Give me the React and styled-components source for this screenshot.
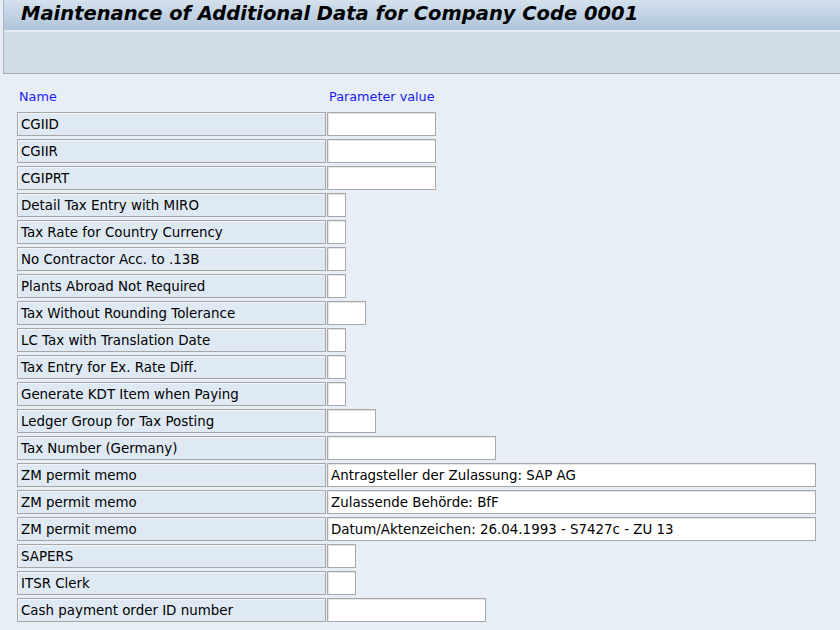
import React from 'react';
import styled, { createGlobalStyle } from 'styled-components';

const GlobalStyle = createGlobalStyle`
  html, body {
    margin: 0;
    padding: 0;
    background: #e8eef5;
  }
  body {
    font-family: "DejaVu Sans", Tahoma, sans-serif;
  }
`;

const Page = styled.div`
  width: 840px;
  height: 630px;
  overflow: hidden;
  background: #e8eef5;
`;

const Header = styled.div`
  margin-left: 3px;
  border-left: 1px solid #a9b5c2;
`;

const TitleBar = styled.div`
  box-sizing: border-box;
  height: 32px;
  display: flex;
  align-items: center;
  padding: 0 0 3px 17px;
  background: linear-gradient(#d4e1ed, #aec4da);
  border-bottom: 2px solid #e4ebf2;
`;

const Title = styled.h1`
  margin: 0;
  font-family: "DejaVu Sans", Verdana, sans-serif;
  font-size: 19.5px;
  font-weight: bold;
  font-style: italic;
  color: #000;
  white-space: nowrap;
`;

const Toolbar = styled.div`
  height: 41px;
  background: #d0dce6;
  border-bottom: 1px solid #a3b0bc;
`;

const Content = styled.div`
  padding: 12px 0 0 17px;
`;

const HeadRow = styled.div`
  display: flex;
  height: 20px;
  align-items: center;
`;

const HeadCell = styled.div`
  width: ${p => p.$w}px;
  padding-left: 2px;
  color: #1b1bf5;
  font-size: 12.8px;
`;

const List = styled.div`
  display: flex;
  flex-direction: column;
  gap: 3px;
  margin-top: 6px;
`;

const Row = styled.div`
  display: flex;
  gap: 1px;
  height: 24px;
`;

const Label = styled.div`
  box-sizing: border-box;
  width: 309px;
  height: 24px;
  padding-left: 3px;
  display: flex;
  align-items: center;
  background: #dfe9f3;
  border: 1px solid #a6a6a6;
  box-shadow: inset 1px 1px 0 #f2f6fa;
  font-size: 13.4px;
  color: #000;
  white-space: nowrap;
`;

const Field = styled.div`
  box-sizing: border-box;
  width: ${p => p.$w}px;
  height: 24px;
  padding-left: 3px;
  display: flex;
  align-items: center;
  background: #fff;
  border: 1px solid #a8a8a8;
  box-shadow: inset 1px 1px 0 #e6e6e6;
  font-size: 13.4px;
  color: #000;
  white-space: nowrap;
`;

const rows = [
  ['CGIID', 109],
  ['CGIIR', 109],
  ['CGIPRT', 109],
  ['Detail Tax Entry with MIRO', 19],
  ['Tax Rate for Country Currency', 19],
  ['No Contractor Acc. to .13B', 19],
  ['Plants Abroad Not Required', 19],
  ['Tax Without Rounding Tolerance', 39],
  ['LC Tax with Translation Date', 19],
  ['Tax Entry for Ex. Rate Diff.', 19],
  ['Generate KDT Item when Paying', 19],
  ['Ledger Group for Tax Posting', 49],
  ['Tax Number (Germany)', 169],
  ['ZM permit memo', 489, 'Antragsteller der Zulassung: SAP AG'],
  ['ZM permit memo', 489, 'Zulassende Behörde: BfF'],
  ['ZM permit memo', 489, 'Datum/Aktenzeichen: 26.04.1993 - S7427c - ZU 13'],
  ['SAPERS', 29],
  ['ITSR Clerk', 29],
  ['Cash payment order ID number', 159],
];

export default function App() {
  return (
    <Page>
      <GlobalStyle />
      <Header>
        <TitleBar>
          <Title>Maintenance of Additional Data for Company Code 0001</Title>
        </TitleBar>
        <Toolbar />
      </Header>
      <Content>
        <HeadRow>
          <HeadCell $w={308}>Name</HeadCell>
          <HeadCell>Parameter value</HeadCell>
        </HeadRow>
        <List>
          {rows.map(([name, w, value], i) => (
            <Row key={i}>
              <Label>{name}</Label>
              <Field $w={w}>{value}</Field>
            </Row>
          ))}
        </List>
      </Content>
    </Page>
  );
}
